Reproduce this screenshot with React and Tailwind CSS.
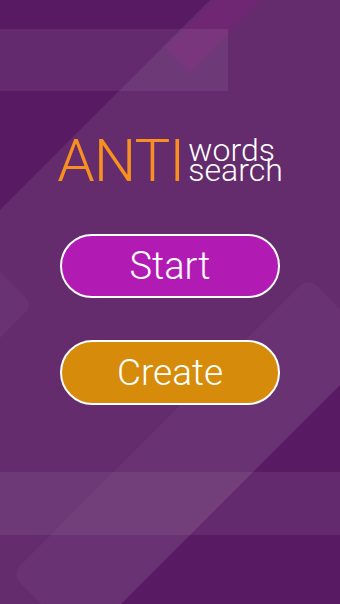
import React from "react";

// background: dark purple with translucent diagonal shapes and bands
function Backdrop() {
  return (
    <svg
      className="absolute inset-0 h-full w-full"
      viewBox="0 0 340 604"
      preserveAspectRatio="none"
    >
      <rect x="0" y="0" width="340" height="604" fill="#581a62" />
      {/* middle diagonal stripe */}
      <polygon
        points="210,0 340,0 340,385 121,604 0,604 0,210"
        fill="#ffffff"
        fillOpacity="0.075"
      />
      {/* magenta wedge at top */}
      <polygon points="213,0 262,0 190,72 165.5,47.5" fill="#8c1f84" fillOpacity="0.3" />
      {/* top band */}
      <rect x="0" y="29" width="228" height="62" fill="#ffffff" fillOpacity="0.07" />
      {/* bottom band */}
      <rect x="0" y="472" width="340" height="63" fill="#ffffff" fillOpacity="0.07" />
      {/* lower rotated rounded stripe */}
      <rect
        x="-398"
        y="414"
        width="420"
        height="99"
        rx="12"
        transform="rotate(-45)"
        fill="#ffffff"
        fillOpacity="0.035"
      />
      {/* faint rounded square poking in at the left edge */}
      <rect
        x="-282"
        y="149"
        width="90"
        height="90"
        rx="10"
        transform="rotate(-45)"
        fill="#ffffff"
        fillOpacity="0.035"
      />
    </svg>
  );
}

export default function App() {
  return (
    <div className="relative h-[604px] w-full overflow-hidden font-['Roboto',sans-serif]">
      <Backdrop />
      <div className="relative flex flex-col items-center pt-[131px]">
        {/* logo */}
        <div className="flex items-start gap-[4px]">
          <span className="text-[60px] leading-[60px] font-light tracking-[-1px] text-[#f7901e]">
            ANTI
          </span>
          <div className="mt-[9px] flex flex-col text-[32px] font-light text-white">
            <span className="leading-[20px]">words</span>
            <span className="leading-[20px]">search</span>
          </div>
        </div>

        <button className="mt-[43px] flex h-[64px] w-[220px] items-center justify-center rounded-full border-2 border-white bg-[#b21ab4] text-[38px] font-light text-white">
          Start
        </button>
        <button className="mt-[42px] flex h-[65px] w-[220px] items-center justify-center rounded-full border-2 border-white bg-[#d68b0a] text-[37px] font-light text-white">
          Create
        </button>
      </div>
    </div>
  );
}
